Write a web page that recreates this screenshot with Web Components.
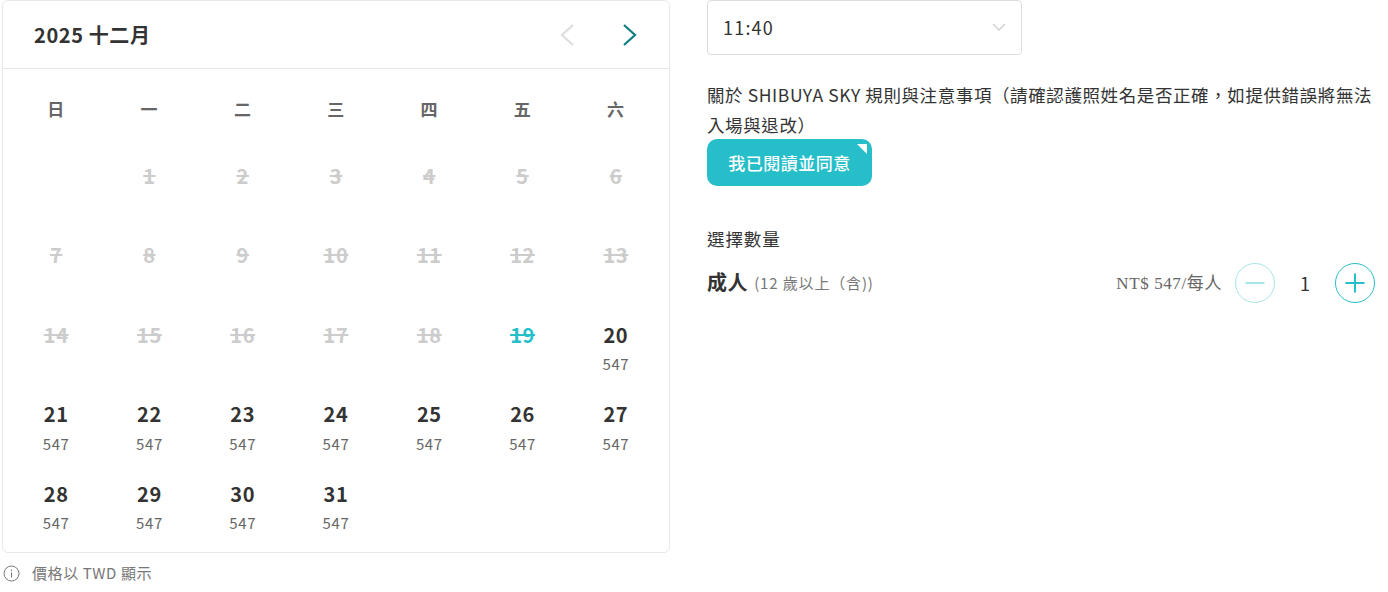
<!DOCTYPE html>
<html lang="zh-Hant">
<head>
<meta charset="utf-8">
<style>
  html, body { margin: 0; background: #fff; }
  body { font-family: "Noto Sans CJK TC", "Noto Sans", sans-serif; color: #333; }
  booking-page { width: 1388px; height: 592px; }
</style>
</head>
<body>
<booking-page></booking-page>
<script>
const SANS = `"Noto Sans CJK TC", "Noto Sans", sans-serif`;

// One day in the calendar
class CalDay extends HTMLElement {
  static get observedAttributes() { return ['day', 'price', 'state']; }
  constructor() {
    super();
    this.attachShadow({ mode: 'open' });
  }
  connectedCallback() { this.render(); }
  attributeChangedCallback() { this.render(); }
  render() {
    const day = this.getAttribute('day') || '';
    const price = this.getAttribute('price');
    this.shadowRoot.innerHTML = `
      <style>
        :host { display: block; height: 79.5px; text-align: center; font-family: ${SANS}; letter-spacing: .6px; }
        .num { font-size: 20px; line-height: 30px; font-weight: 700; color: #333; padding-top: 13.5px; }
        :host([state="off"]) .num { color: #ccc; text-decoration: line-through; }
        :host([state="today"]) .num { color: #26bec9; text-decoration: line-through; }
        .price { font-size: 15px; line-height: 22px; color: #666; margin-top: 3.5px; }
      </style>
      <div class="num">${day}</div>
      ${price ? `<div class="price">${price}</div>` : ''}
    `;
  }
}

// Month calendar card
class CalCard extends HTMLElement {
  constructor() {
    super();
    this.attachShadow({ mode: 'open' });
  }
  connectedCallback() {
    const week = ['日', '一', '二', '三', '四', '五', '六'];
    let days = '<cal-day></cal-day>';
    for (let d = 1; d <= 31; d++) {
      const state = d < 19 ? 'off' : d === 19 ? 'today' : 'on';
      days += `<cal-day day="${d}" state="${state}" ${d > 19 ? 'price="547"' : ''}></cal-day>`;
    }
    this.shadowRoot.innerHTML = `
      <style>
        :host { display: block; width: 668px; box-sizing: border-box; height: 553px; border: 1px solid #e8e8e8; border-radius: 6px; background: #fff; font-family: ${SANS}; letter-spacing: .6px; }
        header { height: 68px; box-sizing: border-box; border-bottom: 1px solid #e8e8e8; display: flex; align-items: center; justify-content: space-between; padding: 0 30px 0 31px; }
        h2 { margin: 0; font-size: 20px; line-height: 30px; font-weight: 700; color: #333; }
        nav { display: flex; gap: 42px; }
        nav svg { display: block; width: 20px; height: 26px; fill: none; stroke-width: 2.2; }
        .grid { display: grid; grid-template-columns: repeat(7, 1fr); padding: 0 6.5px 0 6.5px; }
        .wd { height: 78px; padding-top: 26px; box-sizing: border-box; text-align: center; font-size: 17px; line-height: 28px; font-weight: 700; color: #666; }
      </style>
      <header>
        <h2>2025 十二月</h2>
        <nav>
          <svg viewBox="0 0 20 26" stroke="#ddd"><path d="M16 3 L5 13 L16 23"/></svg>
          <svg viewBox="0 0 20 26" stroke="#0f7c84"><path d="M5 3 L16 13 L5 23"/></svg>
        </nav>
      </header>
      <div class="grid">
        ${week.map(w => `<div class="wd">${w}</div>`).join('')}
        ${days}
      </div>
    `;
  }
}

// Time dropdown
class TimeSelect extends HTMLElement {
  constructor() {
    super();
    this.attachShadow({ mode: 'open' });
    this.shadowRoot.innerHTML = `
      <style>
        :host { display: flex; align-items: center; justify-content: space-between; width: 315px; height: 55px; box-sizing: border-box; border: 1px solid #ddd; border-radius: 4px; padding: 0 15px 2px 15px; font-size: 18px; letter-spacing: 1.2px; color: #333; }
        svg { width: 14px; height: 8px; fill: none; stroke: #ccc; stroke-width: 1.3; }
      </style>
      <slot></slot>
      <svg viewBox="0 0 14 8"><path d="M1 1 L7 7 L13 1"/></svg>
    `;
  }
}

// Teal button with the small corner mark
class AgreeButton extends HTMLElement {
  constructor() {
    super();
    this.attachShadow({ mode: 'open' });
    this.shadowRoot.innerHTML = `
      <style>
        :host { display: flex; align-items: center; justify-content: center; position: relative; width: 165px; height: 47px; box-sizing: border-box; border-radius: 10px; background: #26bec9; color: #fff; font-size: 17px; letter-spacing: .5px; font-weight: 500; }
        i { position: absolute; top: 5px; right: 5px; width: 0; height: 0; border-top: 10px solid #fff; border-left: 10px solid transparent; }
      </style>
      <slot></slot><i></i>
    `;
  }
}

// Ticket quantity row
class QtyRow extends HTMLElement {
  constructor() {
    super();
    this.attachShadow({ mode: 'open' });
    this.shadowRoot.innerHTML = `
      <style>
        :host { display: flex; align-items: center; height: 40px; color: #333; }
        b { font-size: 20px; font-weight: 700; color: #333; letter-spacing: .6px; padding-bottom: 3px; }
        small { font-size: 15px; color: #777; margin-left: 6px; letter-spacing: .85px; padding-bottom: 2px; }
        .price { margin-left: auto; font-family: "Liberation Serif", "Noto Sans CJK TC", serif; font-size: 17px; letter-spacing: .6px; color: #666; margin-right: 13px; padding-bottom: 3px; }
        svg { display: block; width: 40px; height: 40px; fill: none; stroke: #26bec9; }
        .off { opacity: .4; }
        .n { width: 60px; text-align: center; font-size: 18px; color: #333; }
      </style>
      <b>成人</b><small>(12 歲以上（含))</small>
      <span class="price">NT$ 547/每人</span>
      <svg class="off" viewBox="0 0 40 40"><circle cx="20" cy="20" r="19.5"/><path stroke-width="2" d="M10.5 20 H29.5"/></svg>
      <span class="n">1</span>
      <svg viewBox="0 0 40 40"><circle cx="20" cy="20" r="19.5"/><path stroke-width="2" d="M10.5 20 H29.5 M20 10.5 V29.5"/></svg>
    `;
  }
}

// Whole page: calendar on the left, options on the right
class BookingPage extends HTMLElement {
  constructor() {
    super();
    this.attachShadow({ mode: 'open' });
    this.shadowRoot.innerHTML = `
      <style>
        :host { display: flex; gap: 37px; padding-left: 2px; box-sizing: border-box; font-family: ${SANS}; }
        .note { display: flex; align-items: center; gap: 12px; margin-top: 9px; font-size: 15px; line-height: 22px; color: #777; letter-spacing: .6px; }
        .note svg { width: 17px; height: 17px; fill: none; stroke: #777; margin-left: 1px; }
        .side { width: 668px; }
        p { margin: 25px 0 -1px; font-size: 17.5px; line-height: 30px; color: #333; letter-spacing: .6px; }
        .label { margin: 39px 0 0; font-size: 17.5px; line-height: 28px; letter-spacing: .9px; color: #333; }
        qty-row { margin-top: 10px; }
      </style>
      <div>
        <cal-card></cal-card>
        <div class="note">
          <svg viewBox="0 0 17 17"><circle cx="8.5" cy="8.5" r="7.5"/><path d="M8.5 7.5 V12.5 M8.5 4.5 V6"/></svg>
          <span>價格以 TWD 顯示</span>
        </div>
      </div>
      <div class="side">
        <time-select>11:40</time-select>
        <p>關於 SHIBUYA SKY 規則與注意事項（請確認護照姓名是否正確，如提供錯誤將無法入場與退改）</p>
        <agree-button>我已閱讀並同意</agree-button>
        <div class="label">選擇數量</div>
        <qty-row></qty-row>
      </div>
    `;
  }
}

customElements.define('cal-day', CalDay);
customElements.define('cal-card', CalCard);
customElements.define('time-select', TimeSelect);
customElements.define('agree-button', AgreeButton);
customElements.define('qty-row', QtyRow);
customElements.define('booking-page', BookingPage);
</script>
</body>
</html>
